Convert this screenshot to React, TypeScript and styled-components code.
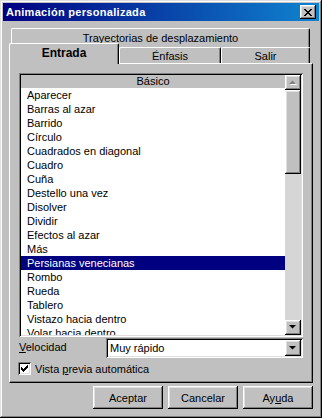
import React from 'react';
import styled, { createGlobalStyle, css } from 'styled-components';

const GlobalStyle = createGlobalStyle`
  html, body {
    margin: 0;
    padding: 0;
    background: #c0c0c0;
  }
  body {
    font-family: "Liberation Sans", Arial, sans-serif;
    font-size: 11px;
    color: #000;
  }
`;

const raised = css`
  box-shadow: inset -1px -1px #000, inset 1px 1px #fff, inset -2px -2px #808080, inset 2px 2px #dfdfdf;
`;

const sunken = css`
  box-shadow: inset 1px 1px #808080, inset -1px -1px #fff, inset 2px 2px #000, inset -2px -2px #dfdfdf;
`;

const Window = styled.div`
  width: 322px;
  height: 418px;
  box-sizing: border-box;
  padding: 3px;
  background: #c0c0c0;
  box-shadow: inset -1px -1px #000, inset 1px 1px #dfdfdf, inset -2px -2px #808080, inset 2px 2px #fff;
  display: flex;
  flex-direction: column;
`;

const TitleBar = styled.div`
  height: 18px;
  display: flex;
  align-items: center;
  justify-content: space-between;
  padding: 0 3px 0 3px;
  background: linear-gradient(90deg, #000080 0%, #1084d0 100%);
`;

const Title = styled.span`
  color: #fff;
  font-weight: bold;
  font-size: 11px;
  letter-spacing: 0.3px;
`;

const CloseButton = styled.div`
  width: 16px;
  height: 14px;
  background: #c0c0c0;
  ${raised};
  display: flex;
  align-items: center;
  justify-content: center;
  svg { margin-left: -1px; }
`;

const Body = styled.div`
  display: flex;
  flex-direction: column;
  padding: 7px 6px 0 6px;
`;

const TopTabRow = styled.div`
  display: flex;
  height: 19px;
  padding: 0 3px 0 2px;
`;

const BottomTabRow = styled.div`
  display: flex;
  align-items: flex-end;
  height: 16px;
  padding-right: 3px;
`;

const Tab = styled.div<{ $w?: number; $selected?: boolean }>`
  ${p => (p.$w ? `width: ${p.$w}px;` : 'flex: 1;')}
  box-sizing: border-box;
  height: ${p => (p.$selected ? 21 : 16)}px;
  ${p => p.$selected && 'margin-bottom: -1px; position: relative; z-index: 1;'}
  border-left: 1px solid #fff;
  border-top: 1px solid #fff;
  border-right: 1px solid #000;
  border-top-left-radius: 2px;
  border-top-right-radius: 2px;
  box-shadow: inset -1px 0 #808080;
  background: #c0c0c0;
  display: flex;
  align-items: center;
  justify-content: center;
  font-weight: ${p => (p.$selected ? 'bold' : 'normal')};
  font-size: ${p => (p.$selected ? 12 : 11)}px;
  padding-bottom: ${p => (p.$selected ? 2 : 0)}px;
`;

const TopTab = styled(Tab)`
  height: 19px;
  padding-bottom: 0;
`;

const Panel = styled.div`
  height: 320px;
  box-sizing: border-box;
  border-left: 1px solid #fff;
  border-top: 1px solid #fff;
  border-right: 1px solid #000;
  border-bottom: 1px solid #000;
  box-shadow: inset -1px -1px #808080;
  padding: 9px 9px 0 9px;
  display: flex;
  flex-direction: column;
`;

const ListBox = styled.div`
  height: 264px;
  box-sizing: border-box;
  padding: 2px;
  background: #fff;
  ${sunken};
  display: flex;
`;

const ListMain = styled.div`
  flex: 1;
  display: flex;
  flex-direction: column;
  overflow: hidden;
`;

const ListHeader = styled.div`
  height: 13px;
  line-height: 13px;
  flex-shrink: 0;
  background: #c0c0c0;
  text-align: center;
`;

const Item = styled.div<{ $selected?: boolean }>`
  height: 14px;
  line-height: 14px;
  flex-shrink: 0;
  padding-left: 6px;
  white-space: nowrap;
  background: ${p => (p.$selected ? '#000080' : 'transparent')};
  color: ${p => (p.$selected ? '#fff' : '#000')};
`;

const ScrollBar = styled.div`
  width: 16px;
  display: flex;
  flex-direction: column;
  background: #d6d6d6;
`;

const ScrollButton = styled.div`
  width: 16px;
  height: 15px;
  flex-shrink: 0;
  box-sizing: border-box;
  background: #c0c0c0;
  ${raised};
  display: flex;
  align-items: center;
  justify-content: center;
`;

const Thumb = styled.div`
  height: 84px;
  background: #c0c0c0;
  ${raised};
`;

const Track = styled.div`
  flex: 1;
`;

const FieldRow = styled.div`
  display: flex;
  align-items: center;
  margin-top: 1px;
  height: 20px;
`;

const Label = styled.span`
  width: 87px;
  margin-top: -3px;
`;

const Combo = styled.div`
  flex: 1;
  height: 20px;
  box-sizing: border-box;
  padding: 2px;
  background: #fff;
  ${sunken};
  display: flex;
  align-items: center;
`;

const ComboText = styled.span`
  flex: 1;
  padding-left: 2px;
`;

const DropButton = styled(ScrollButton)`
  height: 16px;
`;

const CheckRow = styled.div`
  display: flex;
  align-items: center;
  margin-top: 4px;
  margin-left: -1px;
  gap: 4px;
`;

const CheckBox = styled.div`
  width: 13px;
  height: 13px;
  box-sizing: border-box;
  background: #fff;
  ${sunken};
  display: flex;
  align-items: center;
  justify-content: center;
`;

const ButtonRow = styled.div`
  display: flex;
  justify-content: flex-end;
  gap: 5px;
  margin-top: 3px;
`;

const Button = styled.div`
  width: 70px;
  height: 23px;
  box-sizing: border-box;
  background: #c0c0c0;
  ${raised};
  display: flex;
  align-items: center;
  justify-content: center;
`;

const U = styled.span`
  text-decoration: underline;
`;

const Pixels: React.FC<{ rows: number[][][]; w: number; h: number; color: string }> = ({ rows, w, h, color }) => (
  <svg width={w} height={h} viewBox={`0 0 ${w} ${h}`} shapeRendering="crispEdges">
    {rows.map((segs, y) =>
      segs.map(([x, len], i) => <rect key={`${y}-${i}`} x={x} y={y} width={len} height={1} fill={color} />)
    )}
  </svg>
);

const closeRows = [
  [[0, 2], [6, 2]],
  [[1, 2], [5, 2]],
  [[2, 4]],
  [[3, 2]],
  [[2, 4]],
  [[1, 2], [5, 2]],
  [[0, 2], [6, 2]],
];

const CheckMark = () => (
  <svg width={7} height={7} viewBox="0 0 7 7" shapeRendering="crispEdges">
    {[2, 3, 4, 3, 2, 1, 0].map((top, x) => (
      <rect key={x} x={x} y={top} width={1} height={3} fill="#000" />
    ))}
  </svg>
);

const Arrow: React.FC<{ up?: boolean; disabled?: boolean }> = ({ up, disabled }) => {
  const pts = up ? '0,4 7,4 3.5,0.5' : '0,0 7,0 3.5,3.5';
  return (
    <svg width={8} height={5} viewBox="0 0 8 5">
      {disabled && <polygon points={pts} fill="#fff" transform="translate(1,1)" />}
      <polygon points={pts} fill={disabled ? '#808080' : '#000'} />
    </svg>
  );
};

const effects = [
  'Aparecer',
  'Barras al azar',
  'Barrido',
  'Círculo',
  'Cuadrados en diagonal',
  'Cuadro',
  'Cuña',
  'Destello una vez',
  'Disolver',
  'Dividir',
  'Efectos al azar',
  'Más',
  'Persianas venecianas',
  'Rombo',
  'Rueda',
  'Tablero',
  'Vistazo hacia dentro',
  'Volar hacia dentro',
];

const App: React.FC = () => (
  <>
    <GlobalStyle />
    <Window>
      <TitleBar>
        <Title>Animación personalizada</Title>
        <CloseButton>
          <Pixels rows={closeRows} w={8} h={7} color="#000" />
        </CloseButton>
      </TitleBar>
      <Body>
        <TopTabRow>
          <TopTab>Trayectorias de desplazamiento</TopTab>
        </TopTabRow>
        <BottomTabRow>
          <Tab $w={110} $selected>Entrada</Tab>
          <Tab $w={102}>Énfasis</Tab>
          <Tab $w={89}>Salir</Tab>
        </BottomTabRow>
        <Panel>
          <ListBox>
            <ListMain>
              <ListHeader>Básico</ListHeader>
              {effects.map(name => (
                <Item key={name} $selected={name === 'Persianas venecianas'}>
                  {name}
                </Item>
              ))}
            </ListMain>
            <ScrollBar>
              <ScrollButton>
                <Arrow up disabled />
              </ScrollButton>
              <Thumb />
              <Track />
              <ScrollButton>
                <Arrow />
              </ScrollButton>
            </ScrollBar>
          </ListBox>
          <FieldRow>
            <Label>
              <U>V</U>elocidad
            </Label>
            <Combo>
              <ComboText>Muy rápido</ComboText>
              <DropButton>
                <Arrow />
              </DropButton>
            </Combo>
          </FieldRow>
          <CheckRow>
            <CheckBox>
              <CheckMark />
            </CheckBox>
            <span>
              Vista <U>p</U>revia automática
            </span>
          </CheckRow>
        </Panel>
        <ButtonRow>
          <Button>Aceptar</Button>
          <Button>Cancelar</Button>
          <Button>
            Ay<U>u</U>da
          </Button>
        </ButtonRow>
      </Body>
    </Window>
  </>
);

export default App;
